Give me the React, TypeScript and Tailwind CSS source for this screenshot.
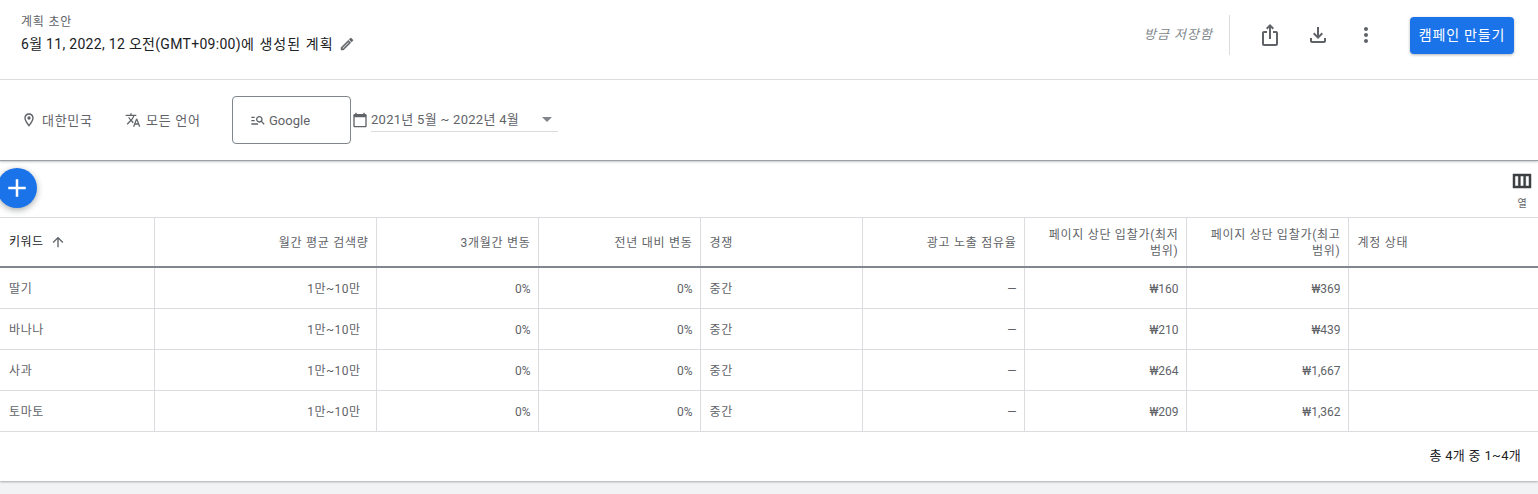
import React from "react";

const ICONS = {
  share:
    "M16 5l-1.42 1.42-1.59-1.59V16h-1.98V4.83L9.42 6.42 8 5l4-4 4 4zm4 5v11c0 1.1-.9 2-2 2H6c-1.11 0-2-.9-2-2V10c0-1.11.89-2 2-2h3v2H6v11h12V10h-3V8h3c1.1 0 2 .89 2 2z",
  download:
    "M18 15v3H6v-3H4v3c0 1.1.9 2 2 2h12c1.1 0 2-.9 2-2v-3h-2zm-1-4l-1.41-1.41L13 12.17V4h-2v8.17L8.41 9.59 7 11l5 5 5-5z",
  more: "M12 8c1.1 0 2-.9 2-2s-.9-2-2-2-2 .9-2 2 .9 2 2 2zm0 2c-1.1 0-2 .9-2 2s.9 2 2 2 2-.9 2-2-.9-2-2-2zm0 6c-1.1 0-2 .9-2 2s.9 2 2 2 2-.9 2-2-.9-2-2-2z",
  edit: "M14.06 9.02l.92.92L5.92 19H5v-.92l9.06-9.06M17.66 3c-.25 0-.51.1-.7.29l-1.83 1.83 3.75 3.75 1.83-1.83c.39-.39.39-1.02 0-1.41l-2.34-2.34c-.2-.2-.45-.29-.71-.29zm-3.6 3.19L3 17.25V21h3.75L17.81 9.94l-3.75-3.75z",
  place:
    "M12 2C8.13 2 5 5.13 5 9c0 5.25 7 13 7 13s7-7.75 7-13c0-3.87-3.13-7-7-7zM7 9c0-2.76 2.24-5 5-5s5 2.24 5 5c0 2.88-2.88 7.19-5 9.88C9.92 16.21 7 11.85 7 9zM12 6.5a2.5 2.5 0 1 0 0 5 2.5 2.5 0 0 0 0-5z",
  translate:
    "M12.87 15.07l-2.54-2.51.03-.03c1.74-1.94 2.98-4.17 3.71-6.53H17V4h-7V2H8v2H1v1.99h11.17C11.5 7.92 10.44 9.75 9 11.35 8.07 10.32 7.3 9.19 6.69 8h-2c.73 1.63 1.73 3.17 2.98 4.56l-5.09 5.02L4 19l5-5 3.11 3.11.76-2.04zM18.5 10h-2L12 22h2l1.12-3h4.75L21 22h2l-4.5-12zm-2.62 7l1.62-4.33L19.12 17h-3.24z",
  search:
    "M7 9H2V7h5v2zm0 3H2v2h5v-2zm13.59 7l-3.83-3.83c-.8.52-1.74.83-2.76.83-2.76 0-5-2.24-5-5s2.24-5 5-5 5 2.24 5 5c0 1.02-.31 1.96-.83 2.75L22 17.59 20.59 19zM17 11c0-1.65-1.35-3-3-3s-3 1.35-3 3 1.35 3 3 3 3-1.35 3-3zM2 19h10v-2H2v2z",
  calendar:
    "M20 3h-1V1h-2v2H7V1H5v2H4c-1.1 0-2 .9-2 2v16c0 1.1.9 2 2 2h16c1.1 0 2-.9 2-2V5c0-1.1-.9-2-2-2zm0 18H4V8h16v13z",
  columns:
    "M3 5v14h18V5H3zm5.33 12H5V7h3.33v10zm5.34 0h-3.33V7h3.33v10zM19 17h-3.33V7H19v10z",
  arrowUp:
    "M4 12l1.41 1.41L11 7.83V20h2V7.83l5.58 5.59L20 12l-8-8-8 8z",
  plus: "M19 13h-6v6h-2v-6H5v-2h6V5h2v6h6v2z",
};

function Icon({ d, className }: { d: string; className: string }) {
  return (
    <svg viewBox="0 0 24 24" fill="currentColor" fillRule="evenodd" className={className}>
      <path d={d} />
    </svg>
  );
}

const COLUMNS = [
  { label: ["월간 평균 검색량"], right: true },
  { label: ["3개월간 변동"], right: true },
  { label: ["전년 대비 변동"], right: true },
  { label: ["경쟁"], right: false },
  { label: ["광고 노출 점유율"], right: true },
  { label: ["페이지 상단 입찰가(최저", "범위)"], right: true },
  { label: ["페이지 상단 입찰가(최고", "범위)"], right: true },
  { label: ["계정 상태"], right: false },
];

const ROWS = [
  ["딸기", "₩160", "₩369"],
  ["바나나", "₩210", "₩439"],
  ["사과", "₩264", "₩1,667"],
  ["토마토", "₩209", "₩1,362"],
];

const cell = "border-r border-b border-[#dadce0] pl-[9px] pr-[7px] pt-[2px] text-[12px] text-[#5f6368]";

export default function App() {
  return (
    <div className="h-[494px] overflow-hidden bg-[#f1f3f4] font-['Roboto','Noto_Sans_CJK_KR',sans-serif]">
      <div className="h-[481px] bg-white shadow-[0_1px_2px_rgba(60,64,67,0.4)]">
        {/* Header */}
        <header className="flex h-[80px] items-start border-b border-[#e0e0e0] pl-[21px]">
          <div className="pt-[14px]">
            <div className="pt-px text-[12px] leading-[15px] tracking-[0.8px] text-[#5f6368]">계획 초안</div>
            <div className="mt-[4px] flex items-center text-[14px] leading-[20px] text-[#202124]">
              <span className="tracking-[0.3px]">6월 11, 2022, 12 오전(GMT+09:00)</span>
              <span className="tracking-[1.05px]">에 생성된 계획</span>
              <Icon d={ICONS.edit} className="ml-[5px] h-[16px] w-[16px] stroke-current stroke-[0.6] text-[#5f6368]" />
            </div>
          </div>
          <div className="ml-auto flex items-center pt-[15px] pr-[24px]">
            <span className="text-[13px] italic tracking-[1px] text-[#80868b]">방금 저장함</span>
            <div className="ml-[16px] h-[40px] w-px bg-[#dadce0]" />
            <Icon d={ICONS.share} className="ml-[28px] h-[24px] w-[24px] text-[#5f6368]" />
            <Icon d={ICONS.download} className="ml-[24px] h-[24px] w-[24px] text-[#5f6368]" />
            <Icon d={ICONS.more} className="ml-[24px] h-[24px] w-[24px] text-[#5f6368]" />
            <button className="ml-[32px] mt-[1px] h-[37px] w-[104px] rounded bg-[#1a73e8] text-[14px] font-normal tracking-[0.8px] text-white shadow-[0_1px_3px_rgba(60,64,67,0.4)]">
              캠페인 만들기
            </button>
          </div>
        </header>

        {/* Filters */}
        <div className="flex h-[81px] items-center border-b border-[#9aa0a6] pl-[21px] text-[13px] text-[#5f6368] shadow-[0_1px_2px_rgba(60,64,67,0.3)]">
          <Icon d={ICONS.place} className="h-[16px] w-[16px]" />
          <span className="ml-[5px] w-[51px] whitespace-nowrap pt-px tracking-[0.7px]">대한민국</span>
          <Icon d={ICONS.translate} className="ml-[32px] h-[16px] w-[16px]" />
          <span className="ml-[5px] w-[54px] whitespace-nowrap pt-px tracking-[0.7px]">모든 언어</span>
          <div className="ml-[32px] flex h-[48px] w-[119px] items-center rounded border border-[#80868b] pl-[17px]">
            <Icon d={ICONS.search} className="h-[16px] w-[16px]" />
            <span className="ml-[3px] pt-px">Google</span>
          </div>
          <Icon d={ICONS.calendar} className="ml-[1px] h-[16px] w-[16px]" />
          <div className="relative ml-[3px] flex h-[24px] w-[187px] items-center border-b border-[#dadce0]">
            <span className="whitespace-nowrap pt-px tracking-[0.28px]">2021년 5월 ~ 2022년 4월</span>
            <span className="absolute right-[6px] top-[9px] h-0 w-0 border-x-[5px] border-t-[5px] border-x-transparent border-t-[#80868b]" />
          </div>
        </div>

        {/* Toolbar */}
        <div className="flex h-[57px] items-start justify-between border-b border-[#dadce0]">
          <button className="mt-[7px] -ml-[3px] flex h-[40px] w-[40px] items-center justify-center rounded-full bg-[#1a73e8] shadow-[0_2px_6px_rgba(60,64,67,0.45)]">
            <Icon d={ICONS.plus} className="h-[30px] w-[30px] text-white" />
          </button>
          <div className="flex w-[32px] flex-col items-center pt-[8px]">
            <Icon d={ICONS.columns} className="h-[24px] w-[24px] stroke-current stroke-[0.5] text-[#3c4043]" />
            <span className="mt-[5px] text-[10px] leading-[12px] text-[#5f6368]">열</span>
          </div>
        </div>

        {/* Table */}
        <table className="w-[1538px] table-fixed border-collapse">
          <colgroup>
            <col className="w-[154px]" />
            <col className="w-[222px]" />
            <col className="w-[162px]" />
            <col className="w-[162px]" />
            <col className="w-[162px]" />
            <col className="w-[162px]" />
            <col className="w-[162px]" />
            <col className="w-[162px]" />
            <col />
          </colgroup>
          <thead>
            <tr className="h-[49px]">
              <th className="border-r border-b-2 border-[#dadce0] border-b-[#80868b] px-2 pl-[9px] text-left text-[12px] font-normal tracking-[0.5px] text-[#202124]">
                <span className="flex items-center">
                  키워드
                  <Icon d={ICONS.arrowUp} className="ml-[6px] h-[16px] w-[16px] text-[#5f6368]" />
                </span>
              </th>
              {COLUMNS.map((c) => (
                <th
                  key={c.label[0]}
                  className={`border-r border-b-2 border-[#dadce0] border-b-[#80868b] pl-[9px] pr-[7px] pt-[2px] text-[12px] leading-[16px] font-normal tracking-[0.72px] whitespace-nowrap text-[#5f6368] last:border-r-0 ${
                    c.right ? "text-right" : "text-left"
                  }`}
                >
                  {c.label.map((line) => (
                    <div key={line}>{line}</div>
                  ))}
                </th>
              ))}
            </tr>
          </thead>
          <tbody>
            {ROWS.map(([name, low, high]) => (
              <tr key={name} className="h-[41px]">
                <td className={`${cell} tracking-[0.6px]`}>{name}</td>
                <td className={`${cell} pr-[15px] text-right tracking-[0.45px]`}>1만~10만</td>
                <td className={`${cell} text-right`}>0%</td>
                <td className={`${cell} text-right`}>0%</td>
                <td className={`${cell} tracking-[0.6px]`}>중간</td>
                <td className={`${cell} text-right`}>—</td>
                <td className={`${cell} text-right`}>{low}</td>
                <td className={`${cell} text-right`}>{high}</td>
                <td className={`${cell} border-r-0`} />
              </tr>
            ))}
          </tbody>
        </table>

        {/* Footer */}
        <div className="flex h-[48px] items-center justify-end pt-px pr-[17px] text-[13px] tracking-[0.3px] text-[#202124]">
          총 4개 중 1~4개
        </div>
      </div>
    </div>
  );
}
